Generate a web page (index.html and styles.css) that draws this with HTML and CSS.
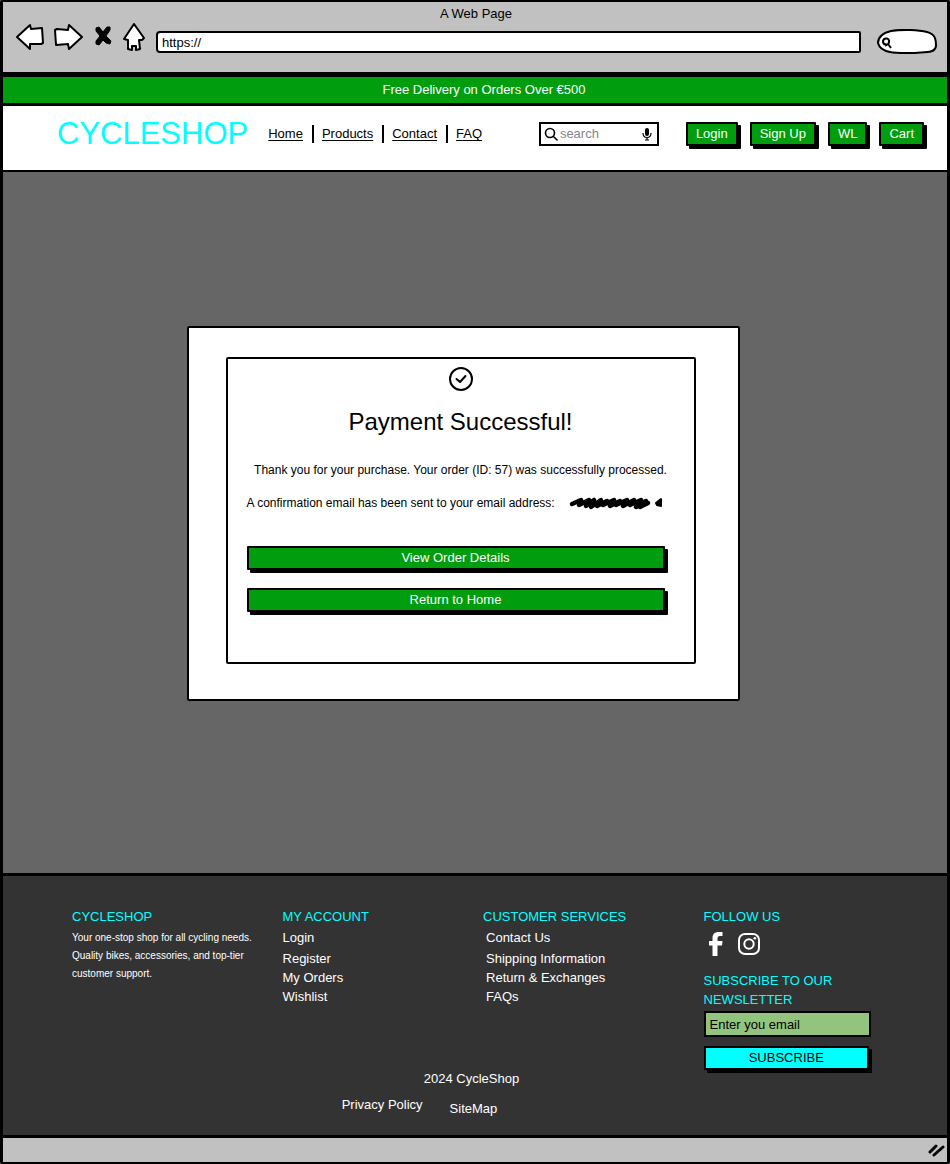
FILE: index.html
```html
<!DOCTYPE html>
<html lang="en">
<head>
<meta charset="utf-8">
<meta name="viewport" content="width=device-width, initial-scale=1">
<title>A Web Page</title>
<link rel="stylesheet" href="styles.css">
</head>
<body>
<div class="window">
  <div class="chrome">
    <div class="chrome-title">A Web Page</div>
    <div class="chrome-row">
      <div class="chrome-icons">
        <button class="icon-btn" type="button" aria-label="Back"><svg width="30" height="30" viewBox="0 0 30 30"><path d="M2 14 L15 2 L16 6 L27 5 L28 20 L26 21 L15 21 L15 26 Z"/></svg></button>
        <button class="icon-btn" type="button" aria-label="Forward"><svg width="30" height="30" viewBox="0 0 30 30"><path d="M2 7 L4 6 L15 7 L16 2 L29 14 L16 26 L15 21 L3 22 Z"/></svg></button>
        <button class="icon-btn icon-stop" type="button" aria-label="Stop"><svg width="18" height="30" viewBox="0 0 18 30"><path d="M2 5 L5 4 L9 9 L13 4 L16 4 L16 7 L12 13 L17 18 L16 21 L12 20 L9 17 L5 22 L2 21 L2 18 L6 13 L2 8 Z" fill="#000" stroke-width="1"/></svg></button>
        <button class="icon-btn" type="button" aria-label="Home"><svg width="24" height="30" viewBox="0 0 24 30"><path d="M12 1 L22 15 L20 17 L17 17 L18 26 L14 27 L14 23 L10 23 L10 27 L6 26 L6 17 L2 16 Z"/></svg></button>
      </div>
      <input class="address" type="text" value="https://" aria-label="Address">
      <div class="chrome-search">
        <svg width="60" height="26" viewBox="0 0 60 26"><path d="M1 14 C1 7 6 4 14 2 C26 0 42 1 50 3 C58 5 59 10 59 17 C58 24 50 23 38 24 C24 24 4 26 1 14 Z"/><path d="M6 12 C7 8 13 9 12 13 C12 16 6 17 6 12 Z M8 17 L11 15 L14 19" stroke-width="2"/></svg>
      </div>
    </div>
  </div>

  <div class="promo">Free Delivery on Orders Over €500</div>

  <header class="header">
    <div class="brand">CYCLESHOP</div>
    <nav class="nav">
      <a href="#">Home</a><a href="#">Products</a><a href="#">Contact</a><a href="#">FAQ</a>
    </nav>
    <label class="search">
      <svg width="14" height="14" viewBox="0 0 14 14" fill="none" stroke="#000" stroke-width="1.600" stroke-linecap="round"><circle cx="6" cy="6" r="4.500"/><path d="M9.500 9.500 L13 13"/></svg>
      <input type="search" placeholder="search" aria-label="Search">
      <svg width="10" height="14" viewBox="0 0 10 14"><rect x="3" y="1" width="4" height="8" rx="2"/><path d="M1 6 C1 12 9 12 9 6 M5 10 V13 M3 13 H7" fill="none" stroke="#000" stroke-width="1.200"/></svg>
    </label>
    <div class="actions">
      <button class="btn" type="button">Login</button>
      <button class="btn" type="button">Sign Up</button>
      <button class="btn" type="button">WL</button>
      <button class="btn" type="button">Cart</button>
    </div>
  </header>

  <main class="main">
    <section class="card">
      <div class="panel">
        <svg class="check" width="26" height="26" viewBox="0 0 26 26" fill="none" stroke="#000" stroke-width="2" stroke-linecap="round" stroke-linejoin="round"><circle cx="13" cy="13" r="11"/><path d="M8.500 13 L12 16 L17.500 10"/></svg>
        <h1 class="title">Payment Successful!</h1>
        <p class="message">Thank you for your purchase. Your order (ID: 57) was successfully processed.</p>
        <p class="message email">A confirmation email has been sent to your email address:
          <svg width="94" height="14" viewBox="0 0 94 14" role="img" aria-label="Hidden email address"><path d="M3 8 L12 4 L10 9 L20 4 L17 10 L25 4 L22 11 L32 4 L28 10 L38 5 L34 9 L45 4 L41 10 L51 5 L47 9 L58 4 L54 10 L65 4 L61 9 L72 4 L67 11 L77 5 L71 11 L79 7" fill="none" stroke="#000" stroke-width="4.500" stroke-linecap="round" stroke-linejoin="round"/><path d="M87 7 L92 3 V10 L88 9 Z" stroke="#000" stroke-width="2" stroke-linejoin="round"/></svg>
        </p>
        <div class="choices">
          <button class="btn wide" type="button">View Order Details</button>
          <button class="btn wide" type="button">Return to Home</button>
        </div>
      </div>
    </section>
  </main>

  <footer class="footer">
    <div class="columns">
      <section>
        <h2>CYCLESHOP</h2>
        <p class="about">Your one-stop shop for all cycling needs. Quality bikes, accessories, and top-tier customer support.</p>
      </section>
      <section>
        <h2>MY ACCOUNT</h2>
        <ul class="links">
          <li><a href="#">Login</a></li>
          <li><a href="#">Register</a></li>
          <li><a href="#">My Orders</a></li>
          <li><a href="#">Wishlist</a></li>
        </ul>
      </section>
      <section>
        <h2>CUSTOMER SERVICES</h2>
        <ul class="links inset">
          <li><a href="#">Contact Us</a></li>
          <li><a href="#">Shipping Information</a></li>
          <li><a href="#">Return &amp; Exchanges</a></li>
          <li><a href="#">FAQs</a></li>
        </ul>
      </section>
      <section>
        <h2>FOLLOW US</h2>
        <div class="social">
          <a href="#" aria-label="Facebook"><svg width="16" height="24" viewBox="0 0 16 24" fill="#fff"><path d="M4.500 24 V13.500 H1 V9 H4.500 V6 C4.500 2 7 0 10.500 0 H14.500 V4 H12 C10 4 9.500 5 9.500 6.500 V9 H14.500 L14 13.500 H9.500 V24 Z"/></svg></a>
          <a href="#" aria-label="Instagram"><svg width="22" height="22" viewBox="0 0 22 22" fill="none" stroke="#fff" stroke-width="2"><rect x="1" y="1" width="20" height="20" rx="6"/><circle cx="11" cy="11" r="4.700"/><circle cx="16.800" cy="5.300" r="1.300" fill="#fff" stroke="none"/></svg></a>
        </div>
        <h2 class="newsletter">SUBSCRIBE TO OUR NEWSLETTER</h2>
        <form class="form">
          <input class="email-input" type="email" placeholder="Enter you email" aria-label="Email">
          <button class="btn cyan" type="button">SUBSCRIBE</button>
        </form>
      </section>
    </div>
    <div class="legal">
      <p>2024 CycleShop</p>
      <div class="legal-links"><a href="#">Privacy Policy</a><a class="sitemap" href="#">SiteMap</a></div>
    </div>
  </footer>

  <div class="statusbar">
    <svg width="18" height="16" viewBox="0 0 18 16" fill="none" stroke="#000" stroke-width="3" stroke-linecap="round"><path d="M3 10 L9 4 M7 13 L16 5"/></svg>
  </div>
</div>
</body>
</html>
```
FILE: styles.css
```css
* { box-sizing: border-box; }

body {
  margin: 0;
  background: #808080;
  color: #000;
  font: 13px/18px "Liberation Sans", Arial, sans-serif;
}

h1, h2, p, ul { margin: 0; padding: 0; font-weight: 400; }
a { color: inherit; }
svg { display: block; flex: none; }
button, input { font: inherit; color: inherit; }

.window {
  display: flex;
  flex-direction: column;
  min-height: 100vh;
  border: 2px solid #000;
  border-width: 2px 3px;
  border-radius: 2px;
}

.chrome {
  padding: 3px 10px 17px 12px;
  background: #c1c1c1;
  border-bottom: 5px solid #000;
}
.chrome-title { text-align: center; }
.chrome-row { display: flex; align-items: flex-start; }
.chrome-icons { display: flex; gap: 8px; }
.icon-btn { display: block; padding: 0; border: 0; background: none; }
.icon-stop { margin: 0 2px 0 3px; }
.icon-btn svg, .chrome-search svg {
  fill: #fff;
  stroke: #000;
  stroke-width: 2;
  stroke-linejoin: round;
}
.address {
  flex: 1;
  min-width: 0;
  height: 22px;
  margin: 8px 16px 0 10px;
  padding: 0 4px;
  border: 2px solid #000;
  border-radius: 4px 2px 2px 4px;
  background: #fff;
}
.chrome-search { margin-top: 6px; }

.promo {
  padding: 4px 0 4px 18px;
  background: #009e0f;
  border-bottom: 3px solid #000;
  color: #fff;
  text-align: center;
}

.header {
  display: flex;
  align-items: center;
  padding: 10px 23px 18px 54px;
  background: #fff;
  border-bottom: 2px solid #000;
}
.brand { color: #0ff; font-size: 31px; line-height: 36px; }
.nav { display: flex; margin-left: 20px; }
.nav a { text-underline-offset: 2px; }
.nav a + a { margin-left: 9px; padding-left: 8px; border-left: 2px solid #000; }
.search {
  display: flex;
  align-items: center;
  gap: 2px;
  width: 120px;
  height: 24px;
  margin: 0 27px 0 auto;
  padding: 0 5px 0 3px;
  border: 2px solid #000;
}
.search input { flex: 1; min-width: 0; padding: 0; border: 0; outline: 0; background: none; }
.search input::placeholder { color: #848491; opacity: 1; }
.actions { display: flex; gap: 12px; }

.btn {
  padding: 1px 8px;
  border: 2px solid #000;
  border-radius: 1px;
  background: #009e0f;
  box-shadow: 3px 3px 0 #000;
  color: #fff;
  line-height: 18px;
}

.main {
  display: flex;
  flex: 1;
  align-items: center;
  justify-content: center;
  padding: 24px 24px 42px 0;
  background: #666;
}
.card {
  width: 553px;
  max-width: 100%;
  padding: 29px 42px 35px 37px;
  border: 2px solid #000;
  border-radius: 2px;
  background: #fff;
}
.panel {
  padding: 7px 19px 50px;
  border: 2px solid #000;
  border-radius: 2px;
}
.check { margin: 0 auto; }
.title { margin: 14px 0 23px; font-size: 24px; line-height: 32px; text-align: center; }
.message { font-size: 12px; line-height: 18px; text-align: center; }
.email { display: flex; align-items: center; justify-content: space-between; margin: 15px 0 34px; padding-right: 12px; }
.choices { display: grid; gap: 18px; padding-right: 10px; }

.footer {
  padding: 31px 68px 17px 69px;
  background: #333;
  border-top: 3px solid #000;
  border-bottom: 3px solid #000;
  color: #fff;
}
.footer a { text-decoration: none; }
.footer h2 { color: #0ff; font-size: 13px; line-height: 20px; }
.columns { display: grid; grid-template-columns: 210fr 200fr 220fr 175fr; }
.about { margin-top: 2px; padding-right: 22px; font-size: 10px; line-height: 18px; }
.links { margin-top: 1px; line-height: 19px; list-style: none; }
.links li:first-child { margin-bottom: 2px; }
.inset { padding-left: 3px; }
.social { display: flex; align-items: center; gap: 14px; margin: 5px 0 15px 4px; }
.footer .newsletter { line-height: 19px; }
.form { display: grid; gap: 9px; padding-right: 8px; margin-top: 2px; }
.email-input {
  min-width: 0;
  width: 100%;
  height: 26px;
  padding: 0 4px;
  border: 2px solid #000;
  background: #93c47d;
}
.email-input::placeholder { color: #000; opacity: 1; }
.cyan { margin-right: 2px; background: #0ff; color: #000; }
.legal { text-align: center; padding-right: 8px; }
.legal-links { display: flex; justify-content: center; gap: 27px; margin-top: 8px; padding-right: 104px; }
.sitemap { margin-top: 4px; }

.statusbar { display: flex; justify-content: flex-end; padding: 4px 2px; background: #c1c1c1; }
```
